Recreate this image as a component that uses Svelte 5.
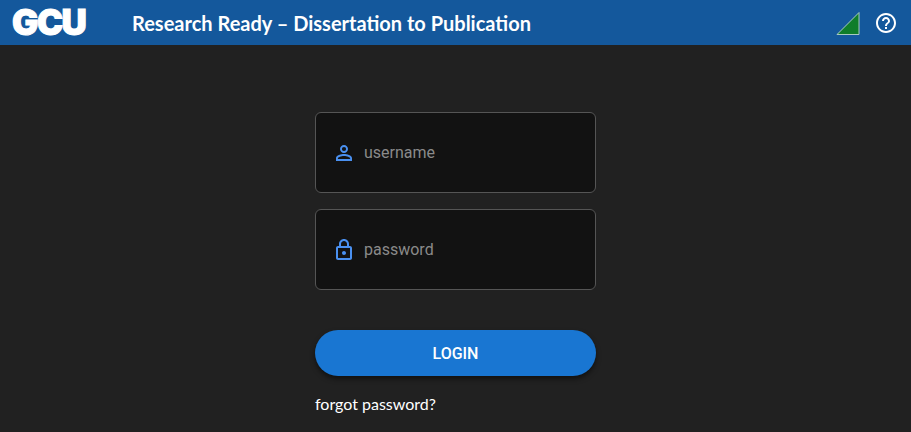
<script lang="ts">
	let username = $state('');
	let password = $state('');
</script>

<header class="topbar">
	<div class="logo">GCU</div>
	<h1 class="title">Research Ready – Dissertation to Publication</h1>
	<div class="status">
		<svg width="24" height="24" viewBox="0 0 24 24">
			<path d="M1 23.5 L23 23.5 L23 1.5 Z" fill="#0f7d2a" stroke="#a9c9c0" stroke-width="1" />
		</svg>
		<svg class="help" width="24" height="24" viewBox="0 0 24 24">
			<path fill="#fff" d="M11 18h2v-2h-2v2zm1-16C6.48 2 2 6.48 2 12s4.48 10 10 10 10-4.48 10-10S17.52 2 12 2zm0 18c-4.41 0-8-3.59-8-8s3.59-8 8-8 8 3.59 8 8-3.59 8-8 8zm0-14c-2.21 0-4 1.79-4 4h2c0-1.1.9-2 2-2s2 .9 2 2c0 2-3 1.75-3 5h2c0-2.25 3-2.5 3-5 0-2.21-1.79-4-4-4z" />
		</svg>
	</div>
</header>

<main class="page">
	<form class="login" onsubmit={(e) => e.preventDefault()}>
		<label class="field">
			<svg width="24" height="24" viewBox="0 0 24 24">
				<path fill="#4a90f0" d="M12 5.9a2.1 2.1 0 1 1 0 4.2 2.1 2.1 0 0 1 0-4.2m0 9c2.97 0 6.1 1.46 6.1 2.1v1.1H5.9V17c0-.64 3.13-2.1 6.1-2.1M12 4C9.79 4 8 5.79 8 8s1.79 4 4 4 4-1.79 4-4-1.79-4-4-4zm0 9c-2.67 0-8 1.34-8 4v3h16v-3c0-2.66-5.33-4-8-4z" />
			</svg>
			<input type="text" placeholder="username" bind:value={username} />
		</label>
		<label class="field">
			<svg width="24" height="24" viewBox="0 0 24 24">
				<path fill="#4a90f0" d="M18 8h-1V6c0-2.76-2.24-5-5-5S7 3.24 7 6v2H6c-1.1 0-2 .9-2 2v10c0 1.1.9 2 2 2h12c1.1 0 2-.9 2-2V10c0-1.1-.9-2-2-2zM9 6c0-1.66 1.34-3 3-3s3 1.34 3 3v2H9V6zm9 14H6V10h12v10zm-6-3c1.1 0 2-.9 2-2s-.9-2-2-2-2 .9-2 2 .9 2 2 2z" />
			</svg>
			<input type="password" placeholder="password" bind:value={password} />
		</label>
		<button class="submit" type="submit">LOGIN</button>
		<a class="forgot" href="#forgot">forgot password?</a>
	</form>
</main>

<style>
	:global(body) {
		background: #212121;
		overflow: hidden;
	}

	.topbar {
		display: flex;
		align-items: center;
		height: 45px;
		background: #14589c;
		color: #fff;
		padding: 0 13px 0 12px;
	}

	.logo {
		width: 80px;
		font-family: "Inter", sans-serif;
		font-size: 35px;
		font-weight: 900;
		line-height: 45px;
		letter-spacing: -1.5px;
		-webkit-text-stroke: 1px #fff;
		white-space: nowrap;
	}

	.title {
		margin: 0 0 0 40px;
		font-family: "Lato", sans-serif;
		font-size: 20px;
		font-weight: 700;
	}

	.status {
		display: flex;
		align-items: center;
		gap: 14px;
		margin-left: auto;
	}

	.page {
		display: flex;
		justify-content: center;
		padding-top: 67px;
	}

	.login {
		display: flex;
		flex-direction: column;
		width: 281px;
	}

	.field {
		display: flex;
		align-items: center;
		gap: 8px;
		box-sizing: border-box;
		height: 81px;
		margin-bottom: 16px;
		padding: 0 16px;
		background: #121212;
		border: 1px solid #555;
		border-radius: 6px;
	}

	.field input {
		flex: 1;
		min-width: 0;
		padding: 0;
		background: none;
		border: 0;
		outline: none;
		color: #fff;
		font-family: "Roboto", sans-serif;
		font-size: 16px;
	}

	.field input::placeholder {
		color: #8a8a8a;
		opacity: 1;
	}

	.submit {
		height: 46px;
		margin-top: 24px;
		background: #1976d2;
		border: 0;
		border-radius: 23px;
		box-shadow: 0 3px 5px rgba(0, 0, 0, 0.5);
		color: #fff;
		font-family: "Roboto", sans-serif;
		font-size: 16px;
		font-weight: 500;
	}

	.forgot {
		margin-top: 18px;
		color: #fff;
		font-family: "Lato", sans-serif;
		font-size: 16px;
		text-decoration: none;
	}
</style>
